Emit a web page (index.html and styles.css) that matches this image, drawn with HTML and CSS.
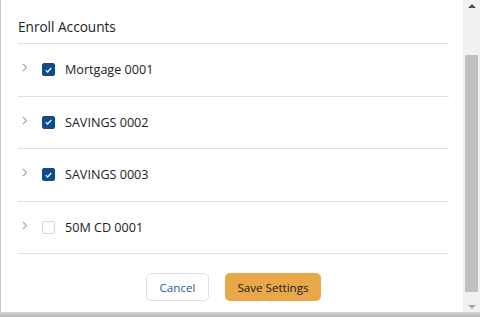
FILE: index.html
```html
<!DOCTYPE html>
<html lang="en">
<head>
  <meta charset="UTF-8">
  <title>Enroll Accounts</title>
  <link rel="stylesheet" href="styles.css">
</head>
<body>
  <div class="frame">
    <div class="panel">
      <h2 class="title">Enroll Accounts</h2>

      <ul class="accounts">
        <li class="account">
          <span class="chevron"><svg viewBox="0 0 6 9" width="6" height="9"><path d="M1 1l3.5 3.5L1 8" fill="none" stroke="#a8a8a8" stroke-width="1.2"/></svg></span>
          <span class="check on"><svg viewBox="0 0 12 12" width="12" height="12"><path d="M3 6.2l2 2 4-4.4" fill="none" stroke="#fff" stroke-width="1.3"/></svg></span>
          <span class="name">Mortgage 0001</span>
        </li>
        <li class="account">
          <span class="chevron"><svg viewBox="0 0 6 9" width="6" height="9"><path d="M1 1l3.5 3.5L1 8" fill="none" stroke="#a8a8a8" stroke-width="1.2"/></svg></span>
          <span class="check on"><svg viewBox="0 0 12 12" width="12" height="12"><path d="M3 6.2l2 2 4-4.4" fill="none" stroke="#fff" stroke-width="1.3"/></svg></span>
          <span class="name">SAVINGS 0002</span>
        </li>
        <li class="account">
          <span class="chevron"><svg viewBox="0 0 6 9" width="6" height="9"><path d="M1 1l3.5 3.5L1 8" fill="none" stroke="#a8a8a8" stroke-width="1.2"/></svg></span>
          <span class="check on"><svg viewBox="0 0 12 12" width="12" height="12"><path d="M3 6.2l2 2 4-4.4" fill="none" stroke="#fff" stroke-width="1.3"/></svg></span>
          <span class="name">SAVINGS 0003</span>
        </li>
        <li class="account">
          <span class="chevron"><svg viewBox="0 0 6 9" width="6" height="9"><path d="M1 1l3.5 3.5L1 8" fill="none" stroke="#a8a8a8" stroke-width="1.2"/></svg></span>
          <span class="check"></span>
          <span class="name">50M CD 0001</span>
        </li>
      </ul>

      <div class="actions">
        <button class="btn-cancel">Cancel</button>
        <button class="btn-save">Save Settings</button>
      </div>
    </div>

    <div class="scrollbar">
      <span class="arrow up"></span>
      <div class="track"><div class="thumb"></div></div>
      <span class="arrow down"></span>
    </div>
  </div>
  <div class="shadow"></div>
</body>
</html>
```

FILE: styles.css
```css
body {
  margin: 0;
  font-family: 'Open Sans', 'Noto Sans', sans-serif;
  color: #222;
  background: #fff;
}
.frame {
  display: flex;
  height: 312px;
  border-left: 1px solid #c8c8c8;
}
.panel {
  flex: 1;
  padding: 0 14px 0 17px;
}
.title {
  margin: 0;
  height: 44px;
  padding-top: 17px;
  box-sizing: border-box;
  font-size: 13.6px;
  font-weight: normal;
  border-bottom: 1px solid #e2e2e2;
}
.accounts {
  list-style: none;
  margin: 0;
  padding: 0;
}
.account {
  display: flex;
  align-items: center;
  height: 53px;
  padding-bottom: 1px;
  box-sizing: border-box;
  border-bottom: 1px solid #e2e2e2;
}
.account:nth-child(even) {
  height: 52px;
}
.chevron {
  width: 24px;
  padding-left: 4px;
  box-sizing: border-box;
  display: flex;
  margin-top: -4px;
}
.check {
  width: 13px;
  height: 13px;
  box-sizing: border-box;
  border: 1px solid #d8d8d8;
  border-radius: 2px;
  margin-right: 10px;
  display: flex;
  align-items: center;
  justify-content: center;
}
.check.on {
  background: #0f4c8c;
  border-color: #0f4c8c;
}
.name {
  font-size: 12.6px;
}
.actions {
  display: flex;
  justify-content: center;
  gap: 16px;
  padding-top: 19px;
}
button {
  height: 28px;
  border-radius: 5px;
  font-family: inherit;
  font-size: 11.6px;
  cursor: pointer;
}
.btn-cancel {
  width: 63px;
  background: #fff;
  border: 1px solid #e0e0e0;
  color: #1f5a9e;
}
.btn-save {
  width: 96px;
  background: #e8a84a;
  border: none;
  color: #222;
}
.scrollbar {
  width: 17px;
  background: #f1f1f1;
  display: flex;
  flex-direction: column;
  align-items: center;
}
.arrow {
  height: 17px;
  width: 17px;
  display: flex;
  align-items: center;
  justify-content: center;
}
.arrow::before {
  content: '';
  border-left: 4px solid transparent;
  border-right: 4px solid transparent;
}
.arrow.up::before {
  border-bottom: 4px solid #505050;
  margin-top: -6px;
}
.arrow.down::before {
  border-top: 4px solid #a3a3a3;
  margin-bottom: -6px;
}
.track {
  flex: 1;
  width: 13px;
  padding: 38px 0 3px;
  box-sizing: border-box;
}
.thumb {
  height: 100%;
  background: #c1c1c1;
}
.shadow {
  height: 5px;
  background: linear-gradient(#d4d4d4, #b8b8b8);
}
```
